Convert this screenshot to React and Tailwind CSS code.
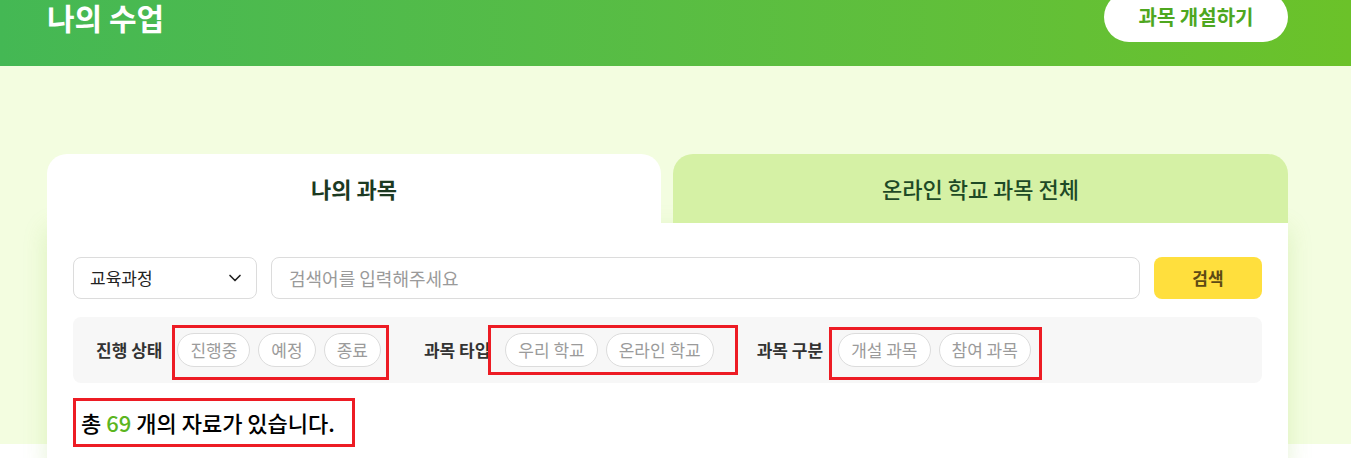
import { ChevronDown } from "lucide-react"

const groups = [
    { label: "진행 상태", chips: ["진행중", "예정", "종료"], box: "-left-[5px] -right-[8px] -top-[8px] -bottom-[13px]" },
    { label: "과목 타입", chips: ["우리 학교", "온라인 학교"], box: "-left-[17px] -right-[24px] -top-[8px] -bottom-[8px]" },
    { label: "과목 구분", chips: ["개설 과목", "참여 과목"], box: "-left-[9px] -right-[11px] -top-[6px] -bottom-[13px]" },
]

function FilterGroup({ label, chips, box }) {
    return (
        <div className="flex items-center">
            <span className="text-[17px] font-bold text-[#333]">{label}</span>
            <div className="relative ml-[15px] flex items-center gap-[8px]">
                {chips.map((chip) => (
                    <span
                        key={chip}
                        className="flex h-[34px] items-center rounded-full border border-[#dcdcdc] bg-white px-[12px] text-[17px] text-[#9b9b9b]"
                    >
                        {chip}
                    </span>
                ))}
                {/* annotation box */}
                <span className={`pointer-events-none absolute border-[3px] border-[#ed1c24] ${box}`} />
            </div>
        </div>
    )
}

export default function App() {
    return (
        <div className="min-h-[458px] font-['Noto_Sans_CJK_KR',sans-serif] bg-white">
            <header className="h-[66px] overflow-hidden bg-gradient-to-r from-[#44b854] to-[#6bc229]">
                <div className="ml-[47px] -mt-[8px] flex h-[50px] w-[1241px] items-center justify-between">
                    <h1 className="text-[30px] font-bold text-white">나의 수업</h1>
                    <button className="flex h-[50px] w-[184px] items-center justify-center rounded-full bg-white text-[20px] font-semibold text-[#4ea71f]">
                        과목 개설하기
                    </button>
                </div>
            </header>

            <main className="bg-[linear-gradient(to_bottom,#f3fde0_378px,#ffffff_378px)] pt-[88px]">
                <div className="ml-[47px] w-[1241px]">
                    <div className="flex gap-[12px]">
                        <div className="flex h-[69px] w-[614px] items-center justify-center rounded-t-[20px] bg-white text-[22px] font-bold text-[#1c3a22]">
                            나의 과목
                        </div>
                        <div className="flex h-[69px] flex-1 items-center justify-center rounded-t-[20px] bg-[#d5f1a5] text-[22px] font-medium text-[#1e4a26]">
                            온라인 학교 과목 전체
                        </div>
                    </div>

                    <div className="bg-white px-[26px] pt-[34px] pb-[20px] shadow-[0_6px_22px_rgba(140,200,70,0.22)]">
                        <div className="flex h-[42px] gap-[14px]">
                            <div className="flex w-[184px] items-center justify-between rounded-[8px] border border-[#dcdcdc] pl-[16px] pr-[11px] text-[17px] text-[#222]">
                                교육과정
                                <ChevronDown size={20} strokeWidth={2} className="text-[#222]" />
                            </div>
                            <div className="flex flex-1 items-center rounded-[8px] border border-[#dcdcdc] px-[17px] text-[18px] text-[#9a9a9a]">
                                검색어를 입력해주세요
                            </div>
                            <button className="w-[108px] rounded-[8px] bg-[#ffdf3d] text-[17px] font-bold text-[#5d4a14]">
                                검색
                            </button>
                        </div>

                        <div className="mt-[18px] flex h-[66px] items-center gap-[43px] rounded-[8px] bg-[#f7f7f7] pl-[23px]">
                            {groups.map((g) => (
                                <FilterGroup key={g.label} {...g} />
                            ))}
                        </div>

                        <div className="mt-[15px] inline-flex h-[49px] items-center border-[3px] border-[#ed1c24] pl-[5px] pr-[17px] text-[22px] font-medium text-black">
                            총&nbsp;<span className="text-[#5bb520]">69</span>&nbsp;개의 자료가 있습니다.
                        </div>
                    </div>
                </div>
            </main>
        </div>
    )
}
